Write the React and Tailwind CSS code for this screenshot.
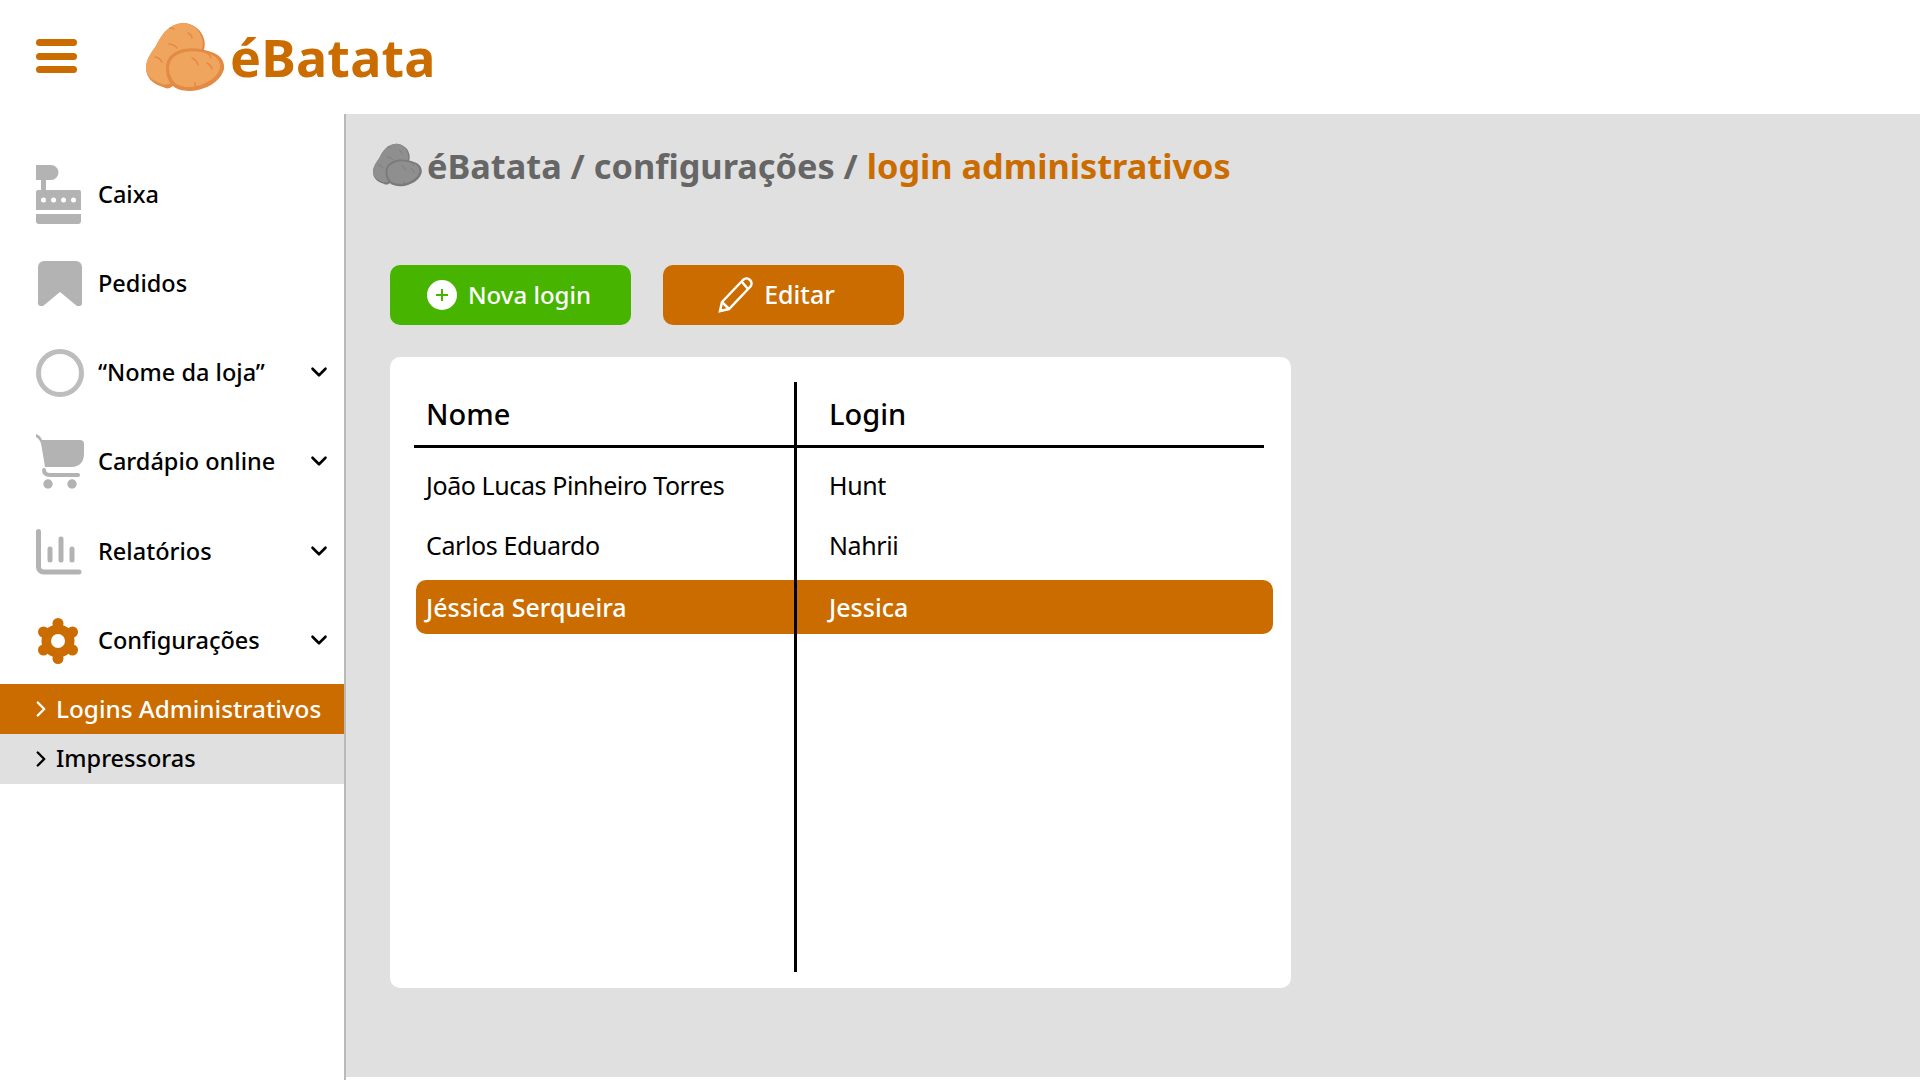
import React from 'react';
import { ChevronDown, ChevronRight } from 'lucide-react';

const FONT = 'font-["Noto_Sans",sans-serif]';

function Potato({ className, skin = '#f0a55f', edge = '#e38a45' }) {
    return (
        <svg viewBox="0 0 80 70" className={className}>
            <path fill={edge} d="M37 1C47 1 56 8 58 17C60 24 58 30 54 34L30 60C26 66 22 68 17 65C7 62 0 56 0 46C0 36 7 29 11 22C16 12 23 2 37 1z" />
            <path fill={skin} d="M37 1C46 1 54 8 56 17C58 24 56 30 50 36L30 58C24 63 20 63 16 62C7 59 0 54 0 46C0 36 7 29 11 22C16 12 23 2 37 1z" />
            <path fill={edge} d="M20 46C20 36 27 29 38 27C47 25 58 27 68 31C75 34 79 40 78 47C76 56 66 65 52 68C43 70 31 69 26 63C22 59 20 53 20 46z" />
            <path fill={skin} d="M23 46C23 38 29 32 39 30C47 28 57 30 66 33C72 36 75 41 74 46C72 54 63 61 51 64C43 66 33 65 28 60C25 56 23 52 23 46z" />
            <g fill="none" stroke={edge} strokeWidth="1.500" strokeLinecap="round">
                <path d="M24 6c2 0 3 0 4 1M42 11c2 1 4 3 4 5M23 22c3 0 6 2 8 4M9 35c3 0 5 2 7 5M46 36c3 1 5 4 6 7M59 30c3 1 5 3 6 6M61 41c2 1 4 3 5 6M49 61c0 1 0 3 1 4" />
            </g>
        </svg>
    );
}

function RegisterIcon() {
    return (
        <svg viewBox="0 0 46 60" className="w-[46px] h-[60px] fill-[#b3b3b3]">
            <path d="M0 0h15a7.500 7.500 0 0 1 0 15H10v10H5V15H0z" />
            <path d="M2 25h41a2 2 0 0 1 2 2v18H0V27a2 2 0 0 1 2-2z" />
            <path d="M0 49h45v7a3 3 0 0 1-3 3H3a3 3 0 0 1-3-3z" />
            <g fill="#fff">
                <circle cx="7.500" cy="35" r="2.500" />
                <circle cx="17.500" cy="35" r="2.500" />
                <circle cx="27.500" cy="35" r="2.500" />
                <circle cx="37.500" cy="35" r="2.500" />
            </g>
        </svg>
    );
}

function BookmarkIcon() {
    return (
        <svg viewBox="0 0 46 46" className="w-[46px] h-[46px] fill-[#b3b3b3]">
            <path d="M8 0H40a6 6 0 0 1 6 6V41a3 3 0 0 1-3 4H41L24 31 7 45H5a3 3 0 0 1-3-4V6a6 6 0 0 1 6-6z" />
        </svg>
    );
}

function CartIcon() {
    return (
        <svg viewBox="0 0 48 56" className="w-12 h-14">
            <path fill="#b3b3b3" d="M0 0C3 1 5 3 6 6L44 6a4 4 0 0 1 4 4V20C48 28 43 33 36 33H9L5.500 12C5 7 2 4 0 3z" />
            <path fill="none" stroke="#b3b3b3" strokeWidth="4" strokeLinecap="round" d="M8 36Q8 41 14 41H42" />
            <circle cx="12" cy="50" r="4.700" fill="#b3b3b3" />
            <circle cx="36" cy="50" r="4.700" fill="#b3b3b3" />
        </svg>
    );
}

function ChartIcon() {
    return (
        <svg viewBox="0 0 46 46" className="w-[46px] h-[46px] fill-none stroke-[#b3b3b3] stroke-[5] [stroke-linecap:round]">
            <path d="M2.500 2.500V38a5 5 0 0 0 5 5H43" />
            <path d="M14 20v11M25 10v21M36 20v11" />
        </svg>
    );
}

function GearIcon() {
    return (
        <svg viewBox="0 0 44 46" className="w-[44px] h-[46px] fill-[#ca6c00]">
            <circle cx="22" cy="23" r="16.500" />
            <circle cx="22" cy="5.500" r="5.500" />
            <circle cx="36.500" cy="14" r="5.500" />
            <circle cx="36.500" cy="32" r="5.500" />
            <circle cx="22" cy="40.500" r="5.500" />
            <circle cx="7.500" cy="32" r="5.500" />
            <circle cx="7.500" cy="14" r="5.500" />
            <circle cx="22" cy="23" r="7" fill="#fff" />
        </svg>
    );
}

const MENU = [
    { label: 'Caixa', icon: <RegisterIcon />, rowH: 'h-[89px]' },
    { label: 'Pedidos', icon: <BookmarkIcon />, rowH: 'h-[89px]' },
    { label: '“Nome da loja”', icon: <div className="w-12 h-12 rounded-full border-[5px] border-[#bdbdbd]" />, arrow: true, rowH: 'h-[89px]' },
    { label: 'Cardápio online', icon: <CartIcon />, arrow: true, rowH: 'h-[90px]' },
    { label: 'Relatórios', icon: <ChartIcon />, arrow: true, rowH: 'h-[89px]' },
    { label: 'Configurações', icon: <GearIcon />, arrow: true, rowH: 'h-[89px]' },
];

const ROWS = [
    { nome: 'João Lucas Pinheiro Torres', login: 'Hunt' },
    { nome: 'Carlos Eduardo', login: 'Nahrii' },
    { nome: 'Jéssica Serqueira', login: 'Jessica', selected: true },
];

export default function App() {
    return (
        <div className={`w-[1920px] h-[1080px] overflow-hidden bg-white flex flex-col ${FONT}`}>

            {/* ── Header ── */}
            <header className="h-[114px] flex items-start shrink-0">
                <div className="ml-9 mt-[39px] w-[41px] flex flex-col gap-[6.500px]">
                    <span className="h-[7px] rounded-full bg-[#ca6c00]" />
                    <span className="h-[7px] rounded-full bg-[#ca6c00]" />
                    <span className="h-[7px] rounded-full bg-[#ca6c00]" />
                </div>
                <Potato className="ml-[69px] mt-[22px] w-20 h-[70px]" />
                <span className="ml-1 mt-[21px] text-[52px] leading-[72px] font-bold text-[#ca6c00] tracking-[0.2px]">éBatata</span>
            </header>

            <div className="flex-1 flex min-h-0">

                {/* ── Sidebar ── */}
                <aside className="w-[346px] shrink-0 border-r-2 border-[#b9b9b9] pt-[36px] text-[23.500px]">
                    {MENU.map(item => (
                        <div key={item.label} className={`flex items-center pl-9 pr-3 ${item.rowH}`}>
                            <div className="w-[62px] shrink-0">{item.icon}</div>
                            <span className="flex-1 font-medium text-black leading-none">{item.label}</span>
                            {item.arrow && <ChevronDown size={26} strokeWidth={2.400} className="text-black -mt-0.5" />}
                        </div>
                    ))}
                    <div className="h-[50px] bg-[#ca6c00] text-white flex items-center pl-[28px] mt-[-1px] text-[24.300px]">
                        <ChevronRight size={26} strokeWidth={2.200} />
                        <span className="font-medium ml-[2px]">Logins Administrativos</span>
                    </div>
                    <div className="h-[50px] bg-[#e0e0e0] text-black flex items-center pl-[28px]">
                        <ChevronRight size={26} strokeWidth={2.200} />
                        <span className="font-medium ml-[2px]">Impressoras</span>
                    </div>
                </aside>

                {/* ── Main ── */}
                <main className="flex-1 mb-[3px] bg-[#e0e0e0] pl-[44px]">
                    <div className="flex items-center mt-[28px] ml-[-17px] h-[46px]">
                        <Potato className="w-[50px] h-11" skin="#8f8f8f" edge="#7b7b7b" />
                        <h1 className="ml-1 mt-[3px] text-[34.300px] leading-none font-bold text-[#666666]">
                            éBatata / configurações / <span className="text-[#ca6c00]">login administrativos</span>
                        </h1>
                    </div>

                    <div className="flex gap-8 mt-[77px]">
                        <button className="w-[241px] h-[60px] rounded-[10px] bg-[#47b500] text-white text-[24px] font-medium flex items-center justify-center gap-[11px] pr-[3px]">
                            <span className="w-[30px] h-[30px] rounded-full bg-white flex items-center justify-center">
                                <svg viewBox="0 0 14 14" className="w-3.5 h-3.5 stroke-[#47b500] stroke-2"><path d="M7 1v12M1 7h12" /></svg>
                            </span>
                            Nova login
                        </button>
                        <button className="w-[241px] h-[60px] rounded-[10px] bg-[#ca6c00] text-white text-[25px] font-medium flex items-center justify-center gap-2.5 pr-[14px]">
                            <svg viewBox="0 0 36 36" className="w-9 h-9 fill-none stroke-white stroke-[2.500]">
                                <path d="M2 34l2-9L25 3c2-2 5-2 7 0s2 5 0 7L11 32z" />
                                <path d="M4 25l7 7M24 5l6 7" />
                            </svg>
                            Editar
                        </button>
                    </div>

                    {/* ── Table card ── */}
                    <div className="relative w-[901px] h-[631px] mt-8 bg-white rounded-[10px] text-black">
                        <span className="absolute left-[404px] top-[25px] bottom-[16px] w-[3px] bg-black" />
                        <div className="ml-6 mr-[27px] pt-[25px]">
                            <div className="grid grid-cols-[381px_1fr] h-[66px] border-b-[3px] border-black items-center text-[29px] font-medium leading-none">
                                <span className="pl-[12px]">Nome</span>
                                <span className="pl-[34px]">Login</span>
                            </div>
                        </div>
                        <div className="ml-[26px] mr-[18px] mt-[10px]">
                            {ROWS.map(row => (
                                <div
                                    key={row.login}
                                    className={`grid grid-cols-[379px_1fr] items-center leading-none rounded-[10px]
                                        ${row.selected ? 'h-[54px] mt-[8px] bg-[#ca6c00] text-white font-medium text-[25px]' : 'h-[54px] mb-[6px] text-[25px] tracking-[-0.4px]'}`}
                                >
                                    <span className="pl-[10px]">{row.nome}</span>
                                    <span className="pl-[34px]">{row.login}</span>
                                </div>
                            ))}
                        </div>
                    </div>
                </main>
            </div>
        </div>
    );
}
